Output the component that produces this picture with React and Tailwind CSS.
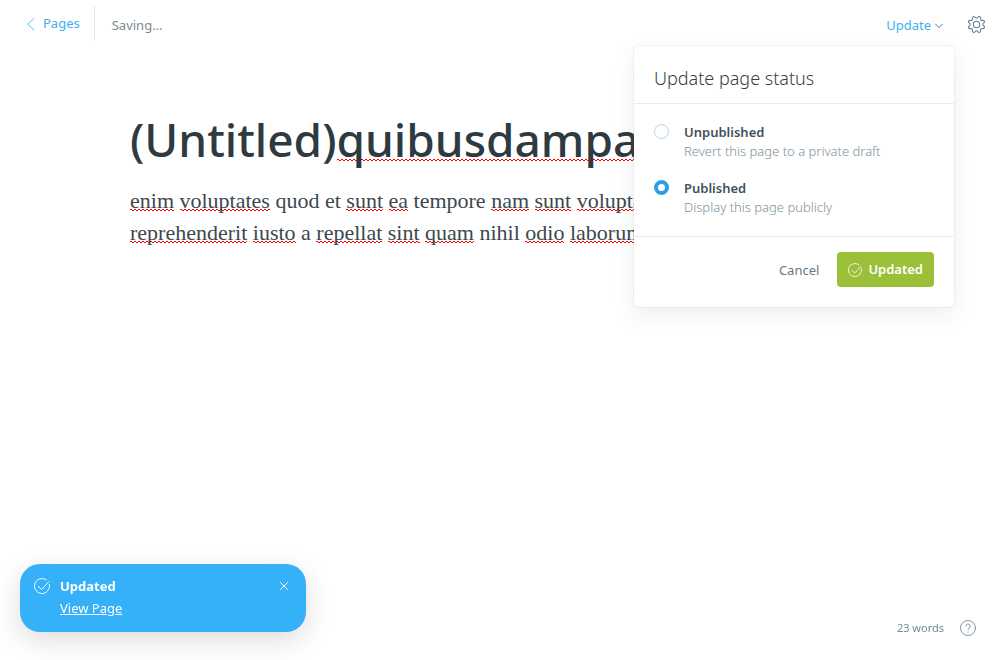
import React, { useState } from "react";

const UI_FONT = "font-['Noto_Sans','Open_Sans',sans-serif]";

const SQUIGGLE =
  "bg-[linear-gradient(90deg,#f00_50%,transparent_50%),linear-gradient(90deg,transparent_50%,#f00_50%)] bg-repeat-x bg-[length:4px_1px,4px_1px]";

function CheckCircle({ className }) {
  return (
    <svg viewBox="0 0 24 24" fill="none" stroke="currentColor" strokeWidth="1.4" strokeLinecap="round" strokeLinejoin="round" className={className} aria-hidden="true">
      <path d="M6.500 12.500l4 4.200c.5.5 1.100.5 1.600 0L22 5.800" />
      <path d="M23 9.600A11.300 11.300 0 1 1 18.500 2.800" />
    </svg>
  );
}

function Gear({ className }) {
  return (
    <svg viewBox="0 0 24 24" fill="none" stroke="currentColor" strokeWidth="1.5" strokeLinecap="round" strokeLinejoin="round" className={className} aria-hidden="true">
      <path d="M10.546 2.438a1.957 1.957 0 0 0 2.908 0L14.4 1.4a1.959 1.959 0 0 1 3.41 1.413l-.071 1.4A1.958 1.958 0 0 0 19.79 6.27l1.4-.071A1.959 1.959 0 0 1 22.6 9.606l-1.041.94a1.96 1.96 0 0 0 0 2.909l1.041.942a1.959 1.959 0 0 1-1.413 3.41l-1.4-.071a1.958 1.958 0 0 0-2.056 2.056l.071 1.4A1.959 1.959 0 0 1 14.4 22.6l-.941-1.041a1.959 1.959 0 0 0-2.908 0l-.946 1.04a1.959 1.959 0 0 1-3.41-1.413l.071-1.4a1.958 1.958 0 0 0-2.056-2.056l-1.4.071A1.958 1.958 0 0 1 1.4 14.4l1.041-.942a1.96 1.96 0 0 0 0-2.909L1.4 9.606A1.958 1.958 0 0 1 2.813 6.2l1.4.071A1.958 1.958 0 0 0 6.27 4.211L6.2 2.812A1.959 1.959 0 0 1 9.606 1.4z" />
      <circle cx="12" cy="12" r="4.5" />
    </svg>
  );
}

function Misspelled({ children }) {
  return <span className={`${SQUIGGLE} bg-[position:0_21px,0_22px]`}>{children}</span>;
}

function StatusOption({ value, title, description, selected, onSelect }) {
  return (
    <label className="flex cursor-pointer items-start gap-[15px]">
      <input
        type="radio"
        name="status"
        value={value}
        checked={selected}
        onChange={() => onSelect(value)}
        className="mt-[2px] size-[15px] shrink-0 appearance-none rounded-full border border-[#b3d3e6] bg-white checked:border-4 checked:border-[#2b9fe3]"
      />
      <span className="flex flex-col">
        <span className="text-[13px] leading-5 font-semibold text-[#43515a]">{title}</span>
        <span className="text-[13px] leading-[18px] font-light text-[#7d929c]">{description}</span>
      </span>
    </label>
  );
}

function StatusMenu() {
  const [status, setStatus] = useState("published");
  return (
    <form
      onSubmit={(e) => e.preventDefault()}
      className="w-80 rounded-[5px] bg-white shadow-[0_0_0_1px_rgba(99,114,130,0.08),0_8px_24px_rgba(27,39,51,0.08)]"
    >
      <h2 className="border-b border-[#e3ecf3] px-5 pt-5 pb-3 text-[18px] leading-[25px] font-light text-[#343f44]">Update page status</h2>
      <div className="flex flex-col gap-[18px] border-b border-[#e3ecf3] px-5 pt-[18px] pb-5">
        <StatusOption value="unpublished" title="Unpublished" description="Revert this page to a private draft" selected={status === "unpublished"} onSelect={setStatus} />
        <StatusOption value="published" title="Published" description="Display this page publicly" selected={status === "published"} onSelect={setStatus} />
      </div>
      <div className="flex items-center justify-end gap-[18px] px-5 pt-[15px] pb-5">
        <button type="button" className="text-[13px] leading-5 text-[#667a84]">Cancel</button>
        <button type="submit" className="flex h-[35px] items-center gap-[6px] rounded bg-[#9abf38] px-[11px] text-[13px] font-semibold text-white">
          <CheckCircle className="size-[14px]" />
          Updated
        </button>
      </div>
    </form>
  );
}

export default function App() {
  return (
    <div className={`flex min-h-screen flex-col overflow-hidden bg-white ${UI_FONT}`}>
      <header className="flex items-start justify-between pr-[15px] pl-[26px]">
        <div className="flex items-center pt-[6px]">
          <a href="#pages" className="flex h-[35px] items-center gap-[7px] border-r border-[#dfe9f0] pt-px pr-[14px] text-[13px] text-[#3eb0ef]">
            <svg viewBox="0 0 10 14" fill="none" stroke="currentColor" strokeWidth="0.8" strokeLinecap="round" strokeLinejoin="round" className="h-[14px] w-[10px]" aria-hidden="true">
              <path d="M8 1.500 1.500 7.200 8 13" />
            </svg>
            Pages
          </a>
          <span className="pt-1 pl-[17px] text-[13px] text-[#7c8b94]">Saving...</span>
        </div>
        <div className="flex h-[46px] items-center gap-[14px]">
          <div className="relative flex h-full items-center pr-[11px]">
            <button type="button" aria-haspopup="true" aria-expanded="true" className="flex items-center gap-1 pt-[5px] text-[13px] text-[#3eb0ef]">
              Update
              <svg viewBox="0 0 8 6" fill="none" stroke="#54788f" strokeWidth="1" strokeLinecap="round" strokeLinejoin="round" className="h-[6px] w-2" aria-hidden="true">
                <path d="M.5 1 4 4.700 7.500 1" />
              </svg>
            </button>
            <div className="absolute top-full right-0 z-10">
              <StatusMenu />
            </div>
          </div>
          <button type="button" aria-label="Settings" className="pt-[2px] text-[#657e89]">
            <Gear className="size-[17px]" />
          </button>
        </div>
      </header>

      <main className="mx-auto w-full max-w-[740px] flex-1 pt-[61px]">
        <h1 className="text-[46px] leading-[64px] font-medium whitespace-nowrap text-[#2f3a40]">
          (Untitled)
          <span className={`${SQUIGGLE} bg-[position:0_51px,0_52px]`}>quibusdampar</span>
        </h1>
        <p className="pt-[14px] font-['Liberation_Serif',serif] text-[22px] leading-8 text-[#3c484e]">
          <Misspelled>enim</Misspelled> <Misspelled>voluptates</Misspelled> quod et <Misspelled>sunt</Misspelled> <Misspelled>ea</Misspelled> tempore <Misspelled>nam</Misspelled> <Misspelled>sunt</Misspelled> <Misspelled>voluptas</Misspelled>
          <br />
          <Misspelled>reprehenderit</Misspelled> <Misspelled>iusto</Misspelled> a <Misspelled>repellat</Misspelled> <Misspelled>sint</Misspelled> <Misspelled>quam</Misspelled> nihil <Misspelled>odio</Misspelled> <Misspelled>laborum</Misspelled>
        </p>
      </main>

      <aside role="status" className="fixed bottom-7 left-5 flex w-[286px] items-start rounded-[20px] bg-[#35b1f9] pt-3 pr-4 pb-3 pl-[14px] text-white shadow-[0_8px_28px_rgba(0,0,0,0.14)]">
        <CheckCircle className="mt-[2px] size-4" />
        <div className="flex flex-1 flex-col items-start pl-[10px] text-[13px]">
          <strong className="leading-5 font-bold">Updated</strong>
          <a href="#view" className="leading-6 underline">View Page</a>
        </div>
        <button type="button" aria-label="Dismiss" className="p-[2px] pt-[6px]">
          <svg viewBox="0 0 8 8" stroke="currentColor" strokeWidth="1" strokeLinecap="round" className="size-2" aria-hidden="true">
            <path d="M.5.5l7 7M7.500.5l-7 7" />
          </svg>
        </button>
      </aside>

      <footer className="fixed right-6 bottom-6 flex items-center gap-4 text-[#738a94]">
        <span className="text-[11px] leading-4">23 words</span>
        <button type="button" aria-label="Help">
          <svg viewBox="0 0 16 16" fill="none" stroke="currentColor" strokeWidth="0.9" strokeLinecap="round" strokeLinejoin="round" className="size-4" aria-hidden="true">
            <circle cx="8" cy="8" r="7.500" />
            <path d="M5.800 6.200a2.200 2.200 0 1 1 3.200 2Q8 8.700 8 9.800" />
            <path d="M8 12v.1" />
          </svg>
        </button>
      </footer>
    </div>
  );
}
